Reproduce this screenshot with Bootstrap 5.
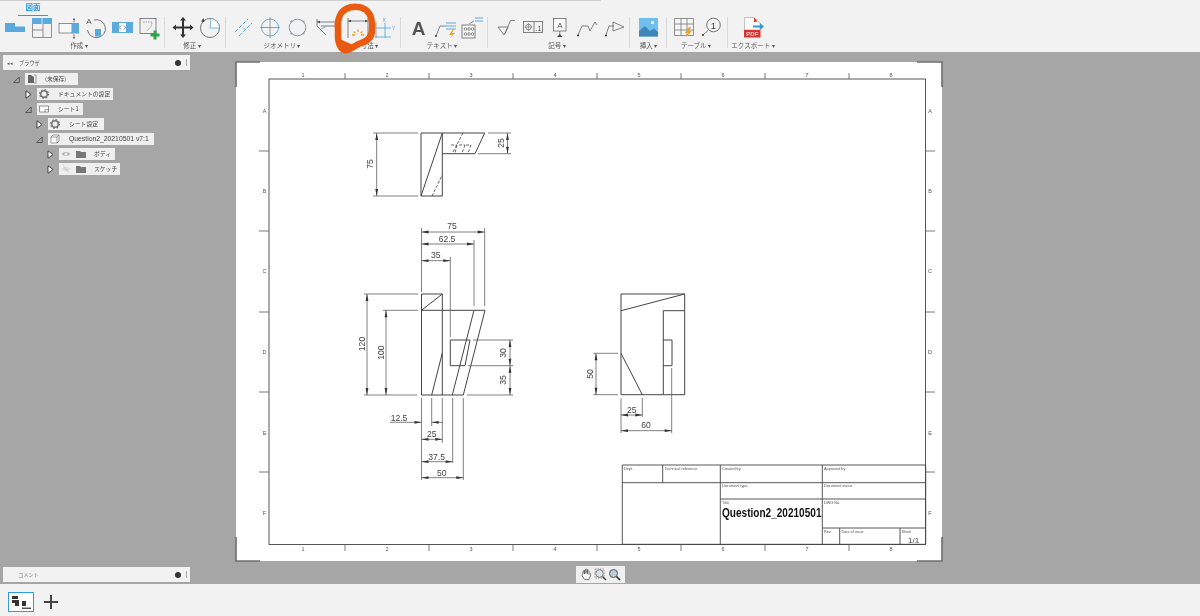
<!DOCTYPE html>
<html lang="ja">
<head>
<meta charset="utf-8">
<title>図面</title>
<link href="https://cdn.jsdelivr.net/npm/bootstrap@5.3.0/dist/css/bootstrap.min.css" rel="stylesheet">
<style>
html,body{height:616px;overflow:hidden;}
body{background:#f2f2f2;font-family:"Noto Sans CJK JP","Liberation Sans",sans-serif;color:#444;filter:blur(.45px);}
svg{display:block;}
.ribbon{height:52px;background:#f2f2f2;position:relative;}
.topline{height:1px;width:601px;background:#cfcfcf;}
.tabrow{height:15px;padding-left:18px;}
.tabitem{width:30px;height:15px;border-bottom:1.5px solid #2f9bd8;color:#2f9bd8;font-size:7.5px;font-weight:700;line-height:11px;text-align:center;}
.rgroup{height:24px;}
.sep{position:relative;}
.sep::after{content:"";position:absolute;right:0;top:1px;bottom:3px;width:1px;background:#d8d8d8;}
.rlabel{font-size:6.5px;line-height:10px;text-align:center;color:#555;white-space:nowrap;}
.caret{font-size:6px;}
.g1{width:165px;}.g1 .rlabel{padding-right:7px;}
.g2{width:61px;}.g2 .rlabel{padding-right:7px;}
.g3a{width:112px;}
.g3b{width:63px;}
.g4{width:87px;}.g4 .rlabel{padding-right:5px;}
.g5{width:142px;}.g5 .rlabel{padding-right:4px;}
.g6{width:37px;}
.g7{width:61px;}.g7 .rlabel{padding-right:3px;}
.g8{width:50px;}
.scribble{position:absolute;left:330px;top:0;z-index:5;}
.workarea{height:532px;background:#a6a6a6;}
.leftcol{width:190px;padding:3px 0 2px 3px;}
.panelbar{height:15px;width:187px;background:#f2f2f2;font-size:5.2px;color:#555;padding:0 3px 0 4px;}
.ptitle{margin-left:6px;}
.ptitle2{margin-left:11px;color:#777;}
.pdot{width:6px;height:6px;border-radius:50%;background:#333;margin-left:auto;margin-right:5px;}
.pgrip{width:1px;height:7px;background:#aaa;}
.treebox{padding-top:1.5px;}
.trow{height:15px;}
.l0{padding-left:10px;}.l1{padding-left:22px;}.l2{padding-left:33px;}.l3{padding-left:44px;}
.tgl{width:7px;height:9px;margin-right:5px;flex:none;}
.chipx{height:12px;background:#efefef;font-size:5.8px;color:#444;padding-left:2px;white-space:nowrap;}
.ticon{width:10px;height:10px;flex:none;}
.ctext{margin-left:9px;}
.icongap{margin-left:5px;}
.ctext2{margin-left:8px;}
.c0{width:53px;}.c1{width:76px;}.c2{width:46px;}.c3{width:56px;}.c4{width:106px;}.c5{width:56px;}.c6{width:61px;}
.c4 .ctext{font-family:"Liberation Sans",sans-serif;font-size:6.8px;}
.canvas{padding:9px 0 0 45px;}
.sheetbox{width:708px;height:501px;}
.navbox{width:49px;height:17px;background:#f0f0f0;margin:4px 0 0 341px;}
.sheetfill{fill:#fff;}
.ln{stroke:#444;stroke-width:1;fill:none;}
.dim{stroke:#555;stroke-width:.75;fill:none;}
.tk{stroke:#555;stroke-width:.8;}
.dash{stroke:#555;stroke-width:.9;stroke-dasharray:3 1.6;fill:none;}
.corner{stroke:#6f6f6f;stroke-width:1.6;fill:none;}
.dt{font-family:"Liberation Sans",sans-serif;font-size:8.6px;fill:#444;text-anchor:middle;}
.gt{font-family:"Liberation Sans",sans-serif;font-size:5.5px;fill:#555;text-anchor:middle;}
.tt{font-family:"Liberation Sans",sans-serif;font-size:3.8px;fill:#555;}
.bigt{font-family:"Liberation Sans",sans-serif;font-size:12.2px;font-weight:700;fill:#111;}
.sheetn{font-family:"Liberation Sans",sans-serif;font-size:8px;fill:#444;}
.bottombar{height:32px;background:#f2f2f2;padding:8px 0 0 8px;}
.thumb{width:26px;height:20px;border:1.5px solid #2f9bd8;background:#fff;}
.plusbtn{margin:2px 0 0 9px;}
</style>
</head>
<body>
<svg width="0" height="0" class="position-absolute">
<defs>
<symbol id="tri" viewBox="0 0 7 9"><path d="M.7 7.5L6.2 2V7.5Z" fill="none" stroke="#444" stroke-width=".8"/></symbol>
<symbol id="arr" viewBox="0 0 7 9"><path d="M1 .8L6 4.5L1 8.2Z" fill="#fff" stroke="#333" stroke-width=".9"/></symbol>
<symbol id="gear" viewBox="0 0 10 10"><circle cx="5" cy="5" r="3.3" fill="none" stroke="#777" stroke-width="1.6"/><circle cx="5" cy="5" r="4.4" fill="none" stroke="#777" stroke-width="1.2" stroke-dasharray="1.7 1.75"/></symbol>
<symbol id="fold" viewBox="0 0 10 10"><path d="M0 2H4L5 3H10V9H0Z" fill="#777"/></symbol>
<symbol id="eye" viewBox="0 0 10 10"><path d="M.5 5Q5 .8 9.5 5Q5 9.2 .5 5Z" fill="#aaa"/><circle cx="5" cy="5" r="1.6" fill="#eee"/></symbol>
<symbol id="eyeoff" viewBox="0 0 10 10"><path d="M.5 5Q5 .8 9.5 5Q5 9.2 .5 5Z" fill="#ddd"/><path d="M2 1.5L8 8.5" stroke="#ccc"/></symbol>
</defs>
</svg>

<header class="ribbon">
<div class="topline"></div>
<div class="tabrow d-flex"><div class="tabitem">図面</div></div>
<div class="d-flex">
  <section class="g1 sep">
    <svg class="rgroup" width="165" height="24" viewBox="0 16 165 24">
      <path d="M5 23H15V26.500H25V32H5Z" fill="#5aaae0"/>
      <path d="M32 18H52V24H32Z" fill="#5aaae0"/><path d="M42 18V24" stroke="#fff" stroke-width=".7"/>
      <path d="M32.500 24V37.500H51.500V24M32.500 30H43V37.500M43 30V24" fill="none" stroke="#777" stroke-width=".8"/>
      <rect x="59" y="23.500" width="13" height="9.500" fill="#f7f7f7" stroke="#777" stroke-width=".8"/>
      <rect x="72" y="23" width="7" height="10.500" fill="#5aaae0"/>
      <path d="M74 18.500V22.500M74 34.500V38.500" stroke="#666" stroke-width=".8"/>
      <path d="M72.800 20L74 18L75.200 20M72.800 37L74 39L75.200 37" fill="#666"/>
      <text x="89" y="24" font-family="Liberation Sans" font-size="8" fill="#555" text-anchor="middle">A</text>
      <path d="M94 20A9 9 0 1 1 87.500 30" fill="none" stroke="#666" stroke-width=".9"/>
      <rect x="95" y="29" width="6" height="7.500" fill="#5aaae0"/>
      <rect x="112" y="22" width="21" height="11" fill="#5aaae0"/>
      <rect x="119" y="23" width="7" height="9" fill="#fff"/>
      <path d="M121 25.500L119.500 27.500L121 29.500M124 25.500L125.500 27.500L124 29.500" fill="none" stroke="#555" stroke-width=".7"/>
      <rect x="140" y="18.500" width="16" height="15" fill="none" stroke="#666" stroke-width=".8"/>
      <path d="M143 22H152Q152 28 146 31" fill="none" stroke="#777" stroke-width=".7" stroke-dasharray="1.500 1"/>
      <path d="M153.500 30.500H156.500V33.500H159.500V36.500H156.500V39.500H153.500V36.500H150.500V33.500H153.500Z" fill="#2ea44f"/>
    </svg>
    <div class="rlabel">作成 <span class="caret">▾</span></div>
  </section>
  <section class="g2 sep">
    <svg class="rgroup" width="61" height="24" viewBox="165 16 61 24">
      <path d="M183 17L186 20.500H184V26.500H190V24.500L193.500 27.500L190 30.500V28.500H184V34.500H186L183 38L180 34.500H182V28.500H176V30.500L172.500 27.500L176 24.500V26.500H182V20.500H180Z" fill="#333"/>
      <circle cx="210" cy="28" r="9.500" fill="none" stroke="#666" stroke-width=".9"/>
      <path d="M210 28H219.500A9.500 9.500 0 0 0 211 18.500Z" fill="#fff" stroke="#5aaae0" stroke-width=".8"/>
      <path d="M203.500 18L201 21.500L204.500 22Z" fill="#444"/>
    </svg>
    <div class="rlabel">修正 <span class="caret">▾</span></div>
  </section>
  <section class="g3a">
    <svg class="rgroup" width="112" height="24" viewBox="226 16 112 24">
      <path d="M235 32L248 19M239 36L252 23" fill="none" stroke="#5aaae0" stroke-width=".9" stroke-dasharray="4 1.500"/>
      <path d="M243 27.500L245 29.500" stroke="#5aaae0"/>
      <circle cx="270" cy="27.500" r="8.500" fill="none" stroke="#5aaae0" stroke-width=".9"/>
      <path d="M270 17V38M260 27.500H280" stroke="#777" stroke-width=".7"/>
      <circle cx="297.500" cy="27.500" r="8.300" fill="none" stroke="#888" stroke-width=".9"/>
      <g fill="#5aaae0"><circle cx="291.500" cy="21.500" r="1.100"/><circle cx="303.500" cy="21.500" r="1.100"/><circle cx="291.500" cy="33.500" r="1.100"/><circle cx="303.500" cy="33.500" r="1.100"/></g>
      <path d="M317 22H335M317 19V26M317 26L326 35M321 26H335" fill="none" stroke="#666" stroke-width=".8"/>
      <path d="M317 22L320 20.800V23.200Z" fill="#444"/>
      <path d="M321 29L327 26" stroke="#5aaae0" stroke-width=".8"/>
    </svg>
    <div class="rlabel">ジオメトリ <span class="caret">▾</span></div>
  </section>
  <section class="g3b sep">
    <svg class="rgroup" width="63" height="24" viewBox="338 16 63 24">
      <path d="M348 18V38M368 18V38M348 21H367.500" fill="none" stroke="#666" stroke-width=".8"/>
      <path d="M348 21L351 19.800V22.200ZM368 21L365 19.800V22.200Z" fill="#444"/>
      <path d="M352 35H355M361 35H364M353.500 31.500L355.500 33M360.500 33L362.500 31.500M358 29.500V32" stroke="#f0a21a" stroke-width="1.300"/>
      <path d="M375 28H391M385 22.500V38M375 37H391" fill="none" stroke="#5aaae0" stroke-width=".9"/>
      <path d="M376 22V38" stroke="#888" stroke-width=".7"/>
      <text x="384" y="22" font-family="Liberation Sans" font-size="5.500" fill="#5aaae0" text-anchor="middle">X</text>
      <text x="393.500" y="30" font-family="Liberation Sans" font-size="5.500" fill="#5aaae0" text-anchor="middle">Y</text>
    </svg>
    <div class="rlabel">寸法 <span class="caret">▾</span></div>
  </section>
  <section class="g4 sep">
    <svg class="rgroup" width="87" height="24" viewBox="401 16 87 24">
      <text x="418.500" y="35" font-family="Liberation Sans" font-weight="700" font-size="19" fill="#555" text-anchor="middle">A</text>
      <path d="M436 36L440 26H446" fill="none" stroke="#666" stroke-width=".8"/>
      <circle cx="436" cy="36" r="1" fill="#333"/>
      <path d="M446 23H456M446 26H456M446 29H456" stroke="#5aaae0" stroke-width="1.200"/>
      <path d="M453 29L449 35H452L450 38L455 33H452L454 29Z" fill="#f0a21a"/>
      <rect x="462" y="25" width="13" height="13" fill="#f5f5f5" stroke="#666" stroke-width=".8"/>
      <g fill="none" stroke="#666" stroke-width=".7"><circle cx="465.500" cy="29" r="1.300"/><circle cx="469" cy="29" r="1.300"/><circle cx="472.500" cy="29" r="1.300"/><circle cx="465.500" cy="34" r="1.300"/><circle cx="469" cy="34" r="1.300"/><circle cx="472.500" cy="34" r="1.300"/></g>
      <path d="M475 18H483M475 21H483" stroke="#5aaae0" stroke-width="1"/>
      <path d="M469 24L474 21" stroke="#666" stroke-width=".7"/>
    </svg>
    <div class="rlabel">テキスト <span class="caret">▾</span></div>
  </section>
  <section class="g5 sep">
    <svg class="rgroup" width="142" height="24" viewBox="488 16 142 24">
      <path d="M498 27H508L504 35ZM505 33.500L510.500 20.500H515" fill="none" stroke="#666" stroke-width=".8"/>
      <rect x="523.500" y="21.500" width="19" height="11" fill="none" stroke="#666" stroke-width=".8"/>
      <path d="M534 21.500V32.500" stroke="#666" stroke-width=".8"/>
      <circle cx="528.500" cy="27" r="2.800" fill="none" stroke="#666" stroke-width=".7"/>
      <path d="M524.500 27H532.500M528.500 23V31" stroke="#666" stroke-width=".5"/>
      <text x="538.500" y="30.500" font-family="Liberation Sans" font-size="7.500" fill="#555" text-anchor="middle">.1</text>
      <rect x="553.500" y="18.500" width="12.500" height="12.500" fill="#fafafa" stroke="#666" stroke-width=".8"/>
      <text x="559.800" y="28" font-family="Liberation Sans" font-size="8" fill="#555" text-anchor="middle">A</text>
      <path d="M559.800 31V36" stroke="#666" stroke-width=".8"/><path d="M557 37H562.500L559.800 34Z" fill="#444"/>
      <path d="M578 35L582 26H588L590 31L595 22L597 25" fill="none" stroke="#666" stroke-width=".8"/>
      <circle cx="578" cy="35.500" r="1" fill="#333"/>
      <path d="M606 35L609 26H614M613 22L624 27L613 31Z" fill="none" stroke="#666" stroke-width=".8"/>
      <circle cx="606" cy="35.500" r="1" fill="#333"/>
    </svg>
    <div class="rlabel">記号 <span class="caret">▾</span></div>
  </section>
  <section class="g6 sep">
    <svg class="rgroup" width="37" height="24" viewBox="630 16 37 24">
      <rect x="639" y="18" width="19" height="18.500" fill="#6fc0ee"/>
      <path d="M639 36.500V31L645 26L650 31L654 28.500L658 32V36.500Z" fill="#3f86bd"/>
      <circle cx="652.500" cy="22.500" r="1.500" fill="#fff"/>
    </svg>
    <div class="rlabel">挿入 <span class="caret">▾</span></div>
  </section>
  <section class="g7 sep">
    <svg class="rgroup" width="61" height="24" viewBox="667 16 61 24">
      <path d="M674.500 18.500H693.500V35.500H674.500ZM674.500 24H693.500M674.500 30H693.500M681 18.500V35.500M687 18.500V35.500" fill="#f5f5f5" stroke="#777" stroke-width=".8"/>
      <path d="M689 27L685 33H688L686 37L692 31H689L691 27Z" fill="#f0a21a"/>
      <circle cx="713.500" cy="25" r="6.800" fill="none" stroke="#666" stroke-width=".9"/>
      <text x="713.500" y="28.500" font-family="Liberation Sans" font-size="9.500" fill="#444" text-anchor="middle">1</text>
      <path d="M703 35L708.500 30" stroke="#666" stroke-width=".8"/>
      <circle cx="703" cy="35" r="1" fill="#333"/>
    </svg>
    <div class="rlabel">テーブル <span class="caret">▾</span></div>
  </section>
  <section class="g8">
    <svg class="rgroup" width="50" height="24" viewBox="728 16 50 24">
      <path d="M744.500 17.500H754L760 23V30H744.500Z" fill="#fafafa" stroke="#aaa" stroke-width=".7"/>
      <path d="M754 17.500L757.500 21.500L754 22Z" fill="#d8322e"/>
      <rect x="744" y="30" width="16.500" height="7.500" fill="#d8322e"/>
      <text x="752.300" y="36.300" font-family="Liberation Sans" font-size="6" fill="#fff" text-anchor="middle">PDF</text>
      <path d="M753 25.500H760V23L764 26.500L760 30V27.500H753Z" fill="#2f9bd8"/>
    </svg>
    <div class="rlabel">エクスポート <span class="caret">▾</span></div>
  </section>
</div>
<svg class="scribble" width="50" height="56" viewBox="330 0 50 56">
  <path d="M338 30C337 20 340 12 346 9C352 6 361 6 366 10C371 14 373 22 372 30C372 37 368 41 361 43C355 45 352 49 347 50C342 51 339 46 338 38Z" fill="none" stroke="#e85b10" stroke-width="6.500" stroke-linecap="round" stroke-linejoin="round"/>
  <path d="M340 43L349 47" stroke="#e85b10" stroke-width="7" stroke-linecap="round"/>
</svg>
</header>

<main class="workarea d-flex">
  <aside class="leftcol d-flex flex-column justify-content-between flex-shrink-0">
    <div>
      <div class="panelbar d-flex align-items-center"><span>◂◂</span><span class="ptitle">ブラウザ</span><span class="pdot"></span><span class="pgrip"></span></div>
      <div class="treebox">
        <div class="trow l0 d-flex align-items-center"><svg class="tgl"><use href="#tri"/></svg><div class="chipx c0 d-flex align-items-center">
          <svg class="ticon" viewBox="0 0 10 10"><path d="M1 1H4L7 3V9H1Z" fill="#666"/><path d="M7 1H9V9H7" fill="none" stroke="#777" stroke-width=".7"/></svg><span class="ctext ctext2">(未保存)</span></div></div>
        <div class="trow l1 d-flex align-items-center"><svg class="tgl"><use href="#arr"/></svg><div class="chipx c1 d-flex align-items-center"><svg class="ticon"><use href="#gear"/></svg><span class="ctext">ドキュメントの設定</span></div></div>
        <div class="trow l1 d-flex align-items-center"><svg class="tgl"><use href="#tri"/></svg><div class="chipx c2 d-flex align-items-center">
          <svg class="ticon" viewBox="0 0 10 10"><path d="M.5 2H9.500V8H.5Z" fill="#fff" stroke="#666" stroke-width=".7"/><path d="M6 8V5.500H9.500" fill="none" stroke="#666" stroke-width=".6"/></svg><span class="ctext">シート1</span></div></div>
        <div class="trow l2 d-flex align-items-center"><svg class="tgl"><use href="#arr"/></svg><div class="chipx c3 d-flex align-items-center"><svg class="ticon"><use href="#gear"/></svg><span class="ctext">シート設定</span></div></div>
        <div class="trow l2 d-flex align-items-center"><svg class="tgl"><use href="#tri"/></svg><div class="chipx c4 d-flex align-items-center">
          <svg class="ticon" viewBox="0 0 10 10"><path d="M1 3L3 1H9V7L7 9H1ZM1 3H7V9M7 3L9 1" fill="#fafafa" stroke="#777" stroke-width=".7"/></svg><span class="ctext">Question2_20210501 v7:1</span></div></div>
        <div class="trow l3 d-flex align-items-center"><svg class="tgl"><use href="#arr"/></svg><div class="chipx c5 d-flex align-items-center"><svg class="ticon"><use href="#eye"/></svg><svg class="ticon icongap"><use href="#fold"/></svg><span class="ctext2">ボディ</span></div></div>
        <div class="trow l3 d-flex align-items-center"><svg class="tgl"><use href="#arr"/></svg><div class="chipx c6 d-flex align-items-center"><svg class="ticon"><use href="#eyeoff"/></svg><svg class="ticon icongap"><use href="#fold"/></svg><span class="ctext2">スケッチ</span></div></div>
      </div>
    </div>
    <div class="panelbar d-flex align-items-center"><span class="ptitle2">コメント</span><span class="pdot"></span><span class="pgrip"></span></div>
  </aside>

  <section class="canvas">
    <div class="sheetbox">
    <svg width="708" height="501" viewBox="235 61 708 501">
      <rect class="sheetfill" x="236" y="62" width="706" height="499"/>
      <path class="corner" d="M236 87V62H260M917 62H942V87M942 537V561H917M260 561H236V537"/>
      <rect x="269" y="79" width="656.500" height="465.500" fill="none" stroke="#444" stroke-width=".9"/>
      <path class="tk" d="M345 73V79M429 73V79M513 73V79M597 73V79M681 73V79M765 73V79M849 73V79M345 545V551M429 545V551M513 545V551M597 545V551M681 545V551M765 545V551M849 545V551M259 151H269M259 231H269M259 312H269M259 392H269M259 472H269M926 151H935M926 231H935M926 312H935M926 392H935M926 472H935"/>
      <g class="gtx">
        <text class="gt" x="303" y="77">1</text><text class="gt" x="387" y="77">2</text><text class="gt" x="471" y="77">3</text><text class="gt" x="555" y="77">4</text><text class="gt" x="639" y="77">5</text><text class="gt" x="723" y="77">6</text><text class="gt" x="807" y="77">7</text><text class="gt" x="891" y="77">8</text>
        <text class="gt" x="303" y="551">1</text><text class="gt" x="387" y="551">2</text><text class="gt" x="471" y="551">3</text><text class="gt" x="555" y="551">4</text><text class="gt" x="639" y="551">5</text><text class="gt" x="723" y="551">6</text><text class="gt" x="807" y="551">7</text><text class="gt" x="891" y="551">8</text>
        <text class="gt" x="264.500" y="113">A</text><text class="gt" x="264.500" y="193">B</text><text class="gt" x="264.500" y="273">C</text><text class="gt" x="264.500" y="354">D</text><text class="gt" x="264.500" y="435">E</text><text class="gt" x="264.500" y="515">F</text>
        <text class="gt" x="930" y="113">A</text><text class="gt" x="930" y="193">B</text><text class="gt" x="930" y="273">C</text><text class="gt" x="930" y="354">D</text><text class="gt" x="930" y="435">E</text><text class="gt" x="930" y="515">F</text>
      </g>

      <path class="ln" d="M421 133H484.700L475 153.700H442.300M421 133V196H442.300V133M421 196L442.300 133"/>
      <path class="dash" d="M432 196L442.300 175M463 133L452 154M451 145H457M459 145H465M466 145H471M457 145L455 153M465 145L462 153M471 145L468 153"/>
      <path class="dim" d="M373 133H418M373 196H418M376.700 133V196M488 133H511M478 153.700H511M507.500 133V153.700"/>
      <g fill="#333">
        <path d="M376.700 133L375.300 140H378.100ZM376.700 196L375.300 189H378.100ZM507.500 133L506.100 140H508.900ZM507.500 153.700L506.100 146.700H508.900Z"/>
      </g>
      <text class="dt" transform="translate(373,164) rotate(-90)">75</text>
      <text class="dt" transform="translate(504,143) rotate(-90)">25</text>

      <path class="ln" d="M421.500 294H442.300V395M421.500 294V395H463.300M421.500 310.300H485M421.500 310.300L442.300 294M474 310.300L452.300 395M485 310.300L463.300 395M442.300 353L431.700 395M450.300 340H470L465 365.700H450.300V340"/>
      <path class="dim" d="M421.500 228V292M484.700 228V306M474 240V306M450.300 257V337M364 294H418M383 310.300H418M364 395H417M467 395H513M473 340H513M468 365.700H513M421.500 398V480M431.700 398V426M442.300 398V443M452.700 398V463M463.300 398V480"/>
      <path class="dim" d="M421.500 232H484.700M421.500 244H474M421.500 260.700H450.300M367 294V395M386 310.300V395M510 340V395M390 422.300H421.500M431.700 422.300H443M421.500 439.300H442.300M421.500 461.700H452.700M421.500 477.700H463.300"/>
      <g fill="#333">
        <path d="M421.500 232L428.500 230.600V233.400ZM484.700 232L477.700 230.600V233.400ZM421.500 244L428.500 242.600V245.400ZM474 244L467 242.600V245.400ZM421.500 260.700L428.500 259.300V262.100ZM450.300 260.700L443.300 259.300V262.100Z"/>
        <path d="M367 294L365.600 301H368.400ZM367 395L365.600 388H368.400ZM386 310.300L384.600 317.300H387.400ZM386 395L384.600 388H387.400ZM510 340L508.600 347H511.400ZM510 365.700L508.600 358.700H511.400ZM510 365.700L508.600 372.700H511.400ZM510 395L508.600 388H511.400Z"/>
        <path d="M421.500 422.300L414.500 420.900V423.700ZM431.700 422.300L438.700 420.900V423.700ZM421.500 439.300L428.500 437.900V440.700ZM442.300 439.300L435.300 437.900V440.700ZM421.500 461.700L428.500 460.300V463.100ZM452.700 461.700L445.700 460.300V463.100ZM421.500 477.700L428.500 476.300V479.100ZM463.300 477.700L456.300 476.300V479.100Z"/>
      </g>
      <text class="dt" x="452" y="229">75</text>
      <text class="dt" x="447" y="242">62.5</text>
      <text class="dt" x="435.700" y="258">35</text>
      <text class="dt" transform="translate(364.500,344) rotate(-90)">120</text>
      <text class="dt" transform="translate(383.500,352.700) rotate(-90)">100</text>
      <text class="dt" transform="translate(506,353) rotate(-90)">30</text>
      <text class="dt" transform="translate(506,380) rotate(-90)">35</text>
      <text class="dt" x="399" y="420.500">12.5</text>
      <text class="dt" x="431.700" y="437">25</text>
      <text class="dt" x="436.700" y="459.500">37.5</text>
      <text class="dt" x="441.700" y="476">50</text>

      <path class="ln" d="M621 294H684.700V394.700H621ZM621 310.700L684.700 294M663.300 394.700V310.700H684.700M663.300 340H672V365.700H663.300M621 353.300L642.300 394.700"/>
      <path class="dim" d="M593.300 353.300H618M593.300 394.700H618M596 353.300V394.700M621 398V433M642.300 398V417M671.700 368V433M621 415H642.300M621 430.700H671.700"/>
      <g fill="#333">
        <path d="M596 353.300L594.600 360.300H597.400ZM596 394.700L594.600 387.700H597.400ZM621 415L628 413.600V416.400ZM642.300 415L635.300 413.600V416.400ZM621 430.700L628 429.300V432.100ZM671.700 430.700L664.700 429.300V432.100Z"/>
      </g>
      <text class="dt" transform="translate(593,374) rotate(-90)">50</text>
      <text class="dt" x="631.700" y="412.500">25</text>
      <text class="dt" x="646" y="428">60</text>

      <path d="M622.300 465H925.700V544.300H622.300ZM622.300 482.700H925.700M720.300 499H925.700M822.300 528H925.700M662.700 465V482.700M720.300 465V544.300M822.300 465V544.300M839.700 528V544.300M900 528V544.300" fill="none" stroke="#444" stroke-width=".9"/>
      <text class="tt" x="624" y="470">Dept.</text>
      <text class="tt" x="664.500" y="470">Technical reference</text>
      <text class="tt" x="722" y="470">Created by</text>
      <text class="tt" x="824" y="470">Approved by</text>
      <text class="tt" x="722" y="487">Document type</text>
      <text class="tt" x="824" y="487">Document status</text>
      <text class="tt" x="722" y="503.500">Title</text>
      <text class="tt" x="824" y="504">DWG No.</text>
      <text class="tt" x="824" y="533">Rev.</text>
      <text class="tt" x="841.500" y="533">Date of issue</text>
      <text class="tt" x="901.500" y="533">Sheet</text>
      <text class="bigt" x="722" y="517" textLength="99.500" lengthAdjust="spacingAndGlyphs">Question2_20210501</text>
      <text class="sheetn" x="908" y="543">1/1</text>
    </svg>
    </div>
    <div class="navbox d-flex align-items-center justify-content-around px-1">
      <svg width="13" height="13" viewBox="0 0 13 13"><path d="M3 6V3.500Q3 2.500 4 3L4.500 6V2Q5 1 6 2V5.500V1.500Q6.500 .7 7.500 1.500V5.500V2.500Q8.500 1.700 9 2.800V6.500L10 5.500Q11 5.500 10.700 6.800L9 11.500H4.500L2 7.500Q2 6 3 6Z" fill="#fff" stroke="#555" stroke-width=".8"/></svg>
      <svg width="13" height="13" viewBox="0 0 13 13"><rect x="1" y="1" width="9" height="9" fill="none" stroke="#777" stroke-width=".7" stroke-dasharray="1.500 1"/><circle cx="5.500" cy="5.500" r="3.800" fill="#d7e3ea" stroke="#666" stroke-width=".8"/><path d="M8.500 8.500L12 12" stroke="#444" stroke-width="1.500"/></svg>
      <svg width="13" height="13" viewBox="0 0 13 13"><circle cx="5.500" cy="5.500" r="4" fill="#b9cdd8" stroke="#555" stroke-width="1"/><path d="M8.500 8.500L12 12" stroke="#333" stroke-width="1.700"/></svg>
    </div>
  </section>
</main>

<footer class="bottombar d-flex">
  <div class="thumb">
    <svg width="23" height="17" viewBox="0 0 23 17"><path d="M3 3H9V6H3ZM3 7H10V13H6V10H3ZM13 8H17V13H13Z" fill="#333"/><path d="M13 14.500H22V16H13Z" fill="#555"/></svg>
  </div>
  <svg class="plusbtn" width="16" height="16" viewBox="0 0 16 16"><path d="M8 1V15M1 8H15" stroke="#444" stroke-width="2"/></svg>
</footer>
<script src="https://cdn.jsdelivr.net/npm/bootstrap@5.3.0/dist/js/bootstrap.bundle.min.js"></script>
</body>
</html>
